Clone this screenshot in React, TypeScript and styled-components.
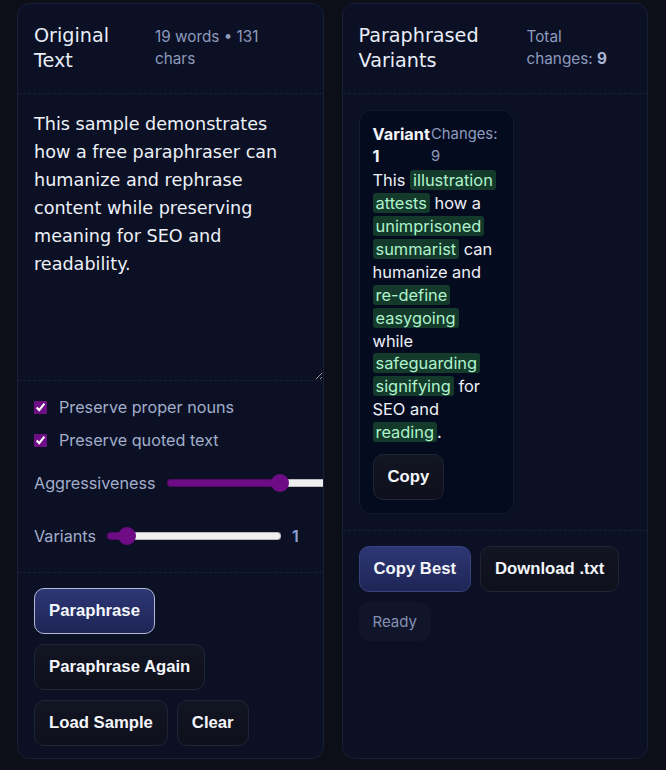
import React from "react";
import styled, { createGlobalStyle } from "styled-components";

const GlobalStyle = createGlobalStyle`
    html, body {
        margin: 0;
        padding: 0;
        background: #0c0e18;
    }
    * {
        box-sizing: border-box;
    }
`;

type Segment = { text: string; changed?: boolean };

const variantSegments: Segment[] = [
    { text: "This " },
    { text: "illustration", changed: true },
    { text: " " },
    { text: "attests", changed: true },
    { text: " how a " },
    { text: "unimprisoned", changed: true },
    { text: " " },
    { text: "summarist", changed: true },
    { text: " can humanize and " },
    { text: "re-define", changed: true },
    { text: " " },
    { text: "easygoing", changed: true },
    { text: " while " },
    { text: "safeguarding", changed: true },
    { text: " " },
    { text: "signifying", changed: true },
    { text: " for SEO and " },
    { text: "reading", changed: true },
    { text: "." },
];

const sampleText =
    "This sample demonstrates how a free paraphraser can humanize and rephrase content while preserving meaning for SEO and readability.";

type SliderProps = {
    label: string;
    min: number;
    max: number;
    value: number;
    display?: string;
};

const SliderRow = ({ label, min, max, value, display }: SliderProps) => {
    const f = (value - min) / (max - min);
    const fill = `${9 + f * 156}px`;
    return (
        <ControlRow tall>
            <ControlLabel>{label}</ControlLabel>
            <Range
                min={min}
                max={max}
                defaultValue={value}
                style={{ "--fill": fill } as React.CSSProperties}
            />
            {display && <RangeValue>{display}</RangeValue>}
        </ControlRow>
    );
};

export default function App() {
    return (
        <>
            <GlobalStyle />
            <Page>
                <Panel>
                    <PanelHeader>
                        <PanelTitle width={109}>Original Text</PanelTitle>
                        <PanelMeta width={122}>19 words • 131 chars</PanelMeta>
                    </PanelHeader>
                    <SourceInput defaultValue={sampleText} spellCheck={false} />
                    <Controls>
                        <ControlRow>
                            <Check defaultChecked />
                            <ControlLabel>Preserve proper nouns</ControlLabel>
                        </ControlRow>
                        <ControlRow>
                            <Check defaultChecked />
                            <ControlLabel>Preserve quoted text</ControlLabel>
                        </ControlRow>
                        <SliderRow label="Aggressiveness" min={0} max={100} value={67} />
                        <SliderRow label="Variants" min={0} max={14} value={1} display="1" />
                    </Controls>
                    <Actions>
                        <Button primary focused>Paraphrase</Button>
                        <Button>Paraphrase Again</Button>
                        <Button>Load Sample</Button>
                        <Button>Clear</Button>
                    </Actions>
                </Panel>

                <Panel>
                    <PanelHeader>
                        <PanelTitle width={156}>Paraphrased Variants</PanelTitle>
                        <PanelMeta width={92}>
                            Total changes: <strong>9</strong>
                        </PanelMeta>
                    </PanelHeader>
                    <VariantList>
                        <VariantCard>
                            <VariantHead>
                                <VariantName>Variant 1</VariantName>
                                <VariantChanges>Changes: 9</VariantChanges>
                            </VariantHead>
                            <VariantText>
                                {variantSegments.map((s, i) =>
                                    s.changed ? <Changed key={i}>{s.text}</Changed> : <React.Fragment key={i}>{s.text}</React.Fragment>
                                )}
                            </VariantText>
                            <CardButton>Copy</CardButton>
                        </VariantCard>
                    </VariantList>
                    <Actions>
                        <Button primary>Copy Best</Button>
                        <Button>Download .txt</Button>
                        <Status>Ready</Status>
                    </Actions>
                </Panel>
            </Page>
        </>
    );
}

const Page = styled.div`
    height: 100vh;
    padding: 3px 18px 11px 17px;
    display: grid;
    grid-template-columns: 1fr 1fr;
    grid-template-rows: 1fr;
    column-gap: 18px;
    font-family: Inter, "Liberation Sans", sans-serif;
`;

const Panel = styled.section`
    display: flex;
    flex-direction: column;
    background: #0b1024;
    border: 1px solid #181e36;
    border-radius: 12px;
    overflow: hidden;
`;

const PanelHeader = styled.header`
    display: flex;
    align-items: baseline;
    gap: 12px;
    padding: 19px 16px 20px;
    border-bottom: 1px dashed #182039;
`;

const PanelTitle = styled.h2<{ width: number }>`
    flex: 0 0 ${(p) => p.width}px;
    margin: 0;
    font-family: "DejaVu Sans", sans-serif;
    font-size: 19.2px;
    font-weight: 400;
    line-height: 25px;
    color: #e8edf7;
`;

const PanelMeta = styled.span<{ width: number }>`
    flex: 0 0 ${(p) => p.width}px;
    font-size: 15.3px;
    line-height: 21.5px;
    color: #8d9abd;

    strong {
        font-weight: 700;
        color: #a9b5d6;
    }
`;

const SourceInput = styled.textarea`
    display: block;
    width: 100%;
    height: 286px;
    margin: 0;
    padding: 16px;
    border: none;
    outline: none;
    resize: vertical;
    background: transparent;
    color: #eef1f8;
    font-family: "DejaVu Sans", sans-serif;
    font-size: 17.6px;
    line-height: 28px;
`;

const Controls = styled.div`
    display: flex;
    flex-direction: column;
    gap: 13px;
    padding: 16px;
    border-top: 1px dashed #182039;
`;

const ControlRow = styled.label<{ tall?: boolean }>`
    display: flex;
    align-items: center;
    gap: ${(p) => (p.tall ? 11 : 12)}px;
    min-height: ${(p) => (p.tall ? 40 : 20)}px;
    white-space: nowrap;
`;

const ControlLabel = styled.span`
    font-size: 16.2px;
    line-height: 20px;
    color: #a2aecb;
`;

const Check = styled.input.attrs({ type: "checkbox" })`
    width: 13px;
    height: 13px;
    margin: 0;
    flex: 0 0 13px;
    accent-color: #6e0d86;
`;

const Range = styled.input.attrs({ type: "range" })`
    -webkit-appearance: none;
    appearance: none;
    flex: 0 0 174px;
    width: 174px;
    height: 18px;
    margin: 0;
    background: transparent;

    &::-webkit-slider-runnable-track {
        height: 8px;
        border-radius: 4px;
        background: linear-gradient(to right, #6d0c85 var(--fill), #efefef var(--fill));
        box-shadow: inset 0 0 0 1px rgba(0, 0, 0, 0.22);
    }

    &::-webkit-slider-thumb {
        -webkit-appearance: none;
        width: 18px;
        height: 18px;
        margin-top: -5px;
        border: none;
        border-radius: 50%;
        background: #6d0c85;
    }
`;

const RangeValue = styled.span`
    font-size: 16px;
    font-weight: 600;
    color: #8fa0d4;
`;

const Actions = styled.div`
    display: flex;
    flex-wrap: wrap;
    align-items: flex-start;
    gap: 10px 9px;
    padding: 15px 16px 12px;
    border-top: 1px dashed #182039;
`;

const Button = styled.button<{ primary?: boolean; focused?: boolean }>`
    height: 46px;
    padding: 0 14px;
    border-radius: 10px;
    border: 1px solid
        ${(p) => (p.focused ? "#b4bad3" : p.primary ? "#37427f" : "#1f2437")};
    background: ${(p) =>
        p.primary
            ? "linear-gradient(180deg, #2d3775 0%, #1e2555 100%)"
            : "linear-gradient(180deg, #121522 0%, #0e111b 100%)"};
    color: #f4f6fb;
    font-family: "Liberation Sans", Arial, sans-serif;
    font-size: 16.7px;
    font-weight: 700;
    cursor: pointer;
`;

const CardButton = styled(Button)`
    margin-top: 10px;
    align-self: flex-start;
`;

const Status = styled.span`
    display: inline-flex;
    align-items: center;
    height: 39px;
    padding: 0 14px;
    border-radius: 10px;
    background: #11152a;
    font-size: 15px;
    color: #8591b3;
`;

const VariantList = styled.div`
    display: flex;
    align-items: flex-start;
    padding: 16px;
`;

const VariantCard = styled.article`
    display: flex;
    flex-direction: column;
    width: 155px;
    padding: 13px;
    background: #050b1f;
    border: 1px solid #131a33;
    border-radius: 12px;
`;

const VariantHead = styled.div`
    display: flex;
    justify-content: space-between;
    margin-bottom: 2px;
    line-height: 21.6px;
`;

const VariantName = styled.strong`
    font-size: 16.3px;
    font-weight: 700;
    color: #f3f5fa;
`;

const VariantChanges = styled.span`
    font-size: 14.8px;
    color: #8d9abd;
`;

const VariantText = styled.p`
    margin: 0;
    font-size: 16.4px;
    line-height: 22.9px;
    color: #eef1f8;
`;

const Changed = styled.span`
    padding: 0 3px;
    border-radius: 3px;
    background: #143a2c;
    color: #aef3cb;
`;
